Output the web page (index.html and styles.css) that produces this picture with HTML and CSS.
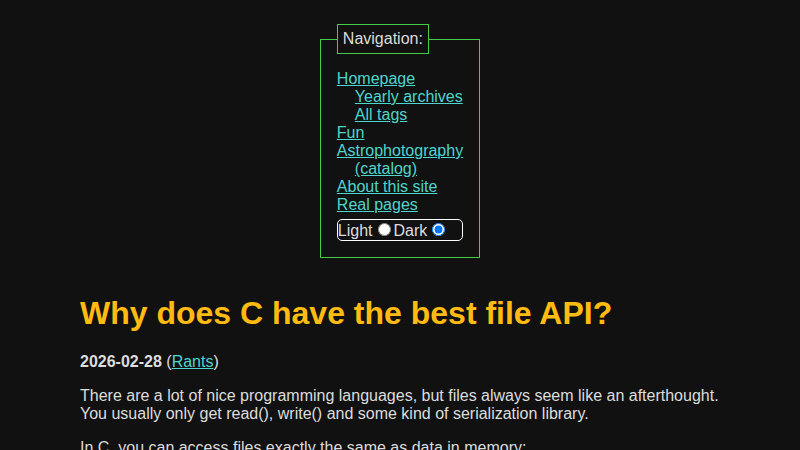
FILE: index.html
```html
<!DOCTYPE html>
<html lang="en">
<head>
  <meta charset="UTF-8">
  <meta name="viewport" content="width=device-width, initial-scale=1.0">
  <title>Why does C have the best file API?</title>
  <link rel="stylesheet" href="styles.css">
</head>
<body>
  <nav class="site-nav">
    <fieldset>
      <legend>Navigation:</legend>
      <ul class="nav-list">
        <li><a href="#">Homepage</a>
          <ul>
            <li><a href="#">Yearly archives</a></li>
            <li><a href="#">All tags</a></li>
          </ul>
        </li>
        <li><a href="#">Fun</a></li>
        <li><a href="#">Astrophotography</a>
          <ul>
            <li><a href="#">(catalog)</a></li>
          </ul>
        </li>
        <li><a href="#">About this site</a></li>
        <li><a href="#">Real pages</a></li>
      </ul>
      <div class="theme-switch">
        <label>Light<input type="radio" name="theme"></label><label>Dark<input type="radio" name="theme" checked></label>
      </div>
    </fieldset>
  </nav>

  <main class="post">
    <h1>Why does C have the best file API?</h1>
    <p class="meta"><b>2026-02-28</b> (<a href="#">Rants</a>)</p>
    <p>There are a lot of nice programming languages, but files always seem like an afterthought. You usually only get read(), write() and some kind of serialization library.</p>
    <p>In C, you can access files exactly the same as data in memory:</p>
  </main>
</body>
</html>
```
FILE: styles.css
```css
body {
  font-family: "Liberation Sans", Arial, sans-serif;
  font-size: 16px;
  background-color: #111;
  color: #ddd;
  margin: 8px;
}

a {
  color: #4dd6cc;
}

.site-nav fieldset {
  width: max-content;
  margin: 16px auto;
  padding: 16px 16px 16px;
  border: 1px solid #44cc44;
}

.site-nav legend {
  padding: 5px;
  border: 1px solid #44cc44;
}

.nav-list,
.nav-list ul {
  list-style: none;
  margin: 0;
  padding: 0;
}

.nav-list ul {
  padding-left: 18px;
}

.theme-switch {
  margin-top: 5px;
  border: 1px solid #fff;
  border-radius: 5px;
}

.post {
  display: flow-root;
  max-width: 640px;
  margin: 0 auto;
}

.post h1 {
  color: #fb1;
  font-size: 32px;
  margin: 21px 0;
}
```
